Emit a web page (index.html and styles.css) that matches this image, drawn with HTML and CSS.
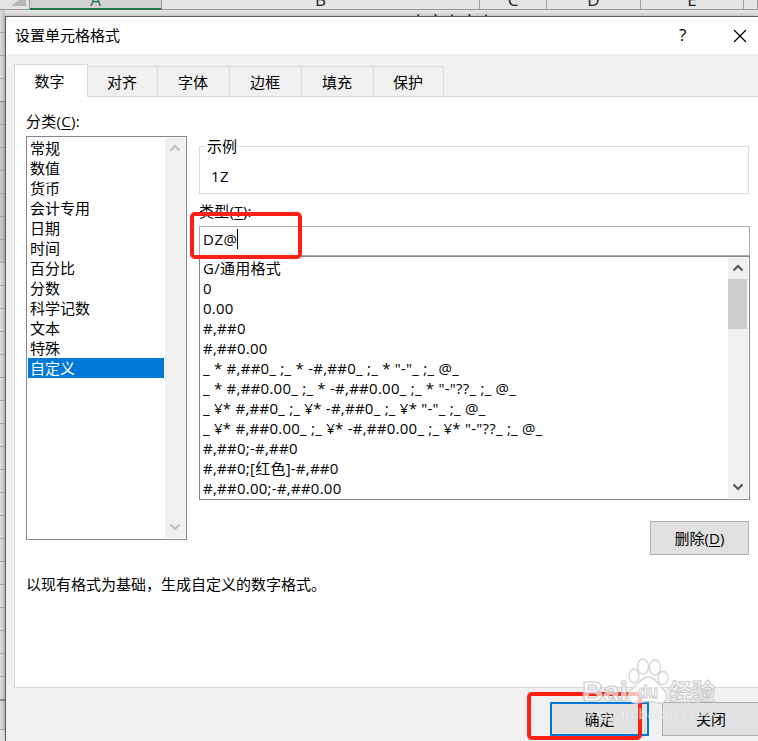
FILE: index.html
```html
<!DOCTYPE html>
<html lang="zh-CN">
<head>
<meta charset="utf-8">
<title>设置单元格格式</title>
<link rel="stylesheet" href="styles.css">
</head>
<body>
<div class="sheet">
  <div class="columns">
    <div class="corner"></div>
    <div class="col col-a"><span>A</span></div>
    <div class="col col-b"><span>B</span></div>
    <div class="col col-c"><span>C</span></div>
    <div class="col col-d"><span>D</span></div>
    <div class="col col-e"><span>E</span></div>
    <div class="col col-f"></div>
  </div>
  <div class="rows">
    <i class="first"></i><i></i><i></i><i class="edge"></i>
    <i class="sel"></i><i class="sel"></i><i class="sel"></i><i class="sel"></i><i class="sel"></i><i class="sel"></i><i class="sel"></i>
    <i></i><i></i><i></i><i></i><i></i><i></i><i></i><i></i><i></i><i></i><i></i><i></i><i></i><i></i><i></i><i></i><i></i><i></i><i class="last"></i><i class="tabs-row"></i>
  </div>
  <div class="cell-text">自定义定义</div>
</div>

<main class="dialog">
  <header class="titlebar">
    <h1>设置单元格格式</h1>
    <span class="help">?</span>
    <svg class="close" width="14" height="14" viewBox="0 0 14 14"><path d="M1 1L13 13M13 1L1 13"/></svg>
  </header>
  <nav class="tabs">
    <span class="tab active">数字</span><span class="tab t2">对齐</span><span class="tab t3">字体</span><span class="tab t4">边框</span><span class="tab t5">填充</span><span class="tab t6">保护</span>
    <span class="tab-line"></span>
  </nav>
  <section class="panel">
    <label class="category-label">分类(<u>C</u>):</label>
    <div class="content">
      <div class="category">
        <ul>
          <li>常规</li><li>数值</li><li>货币</li><li>会计专用</li><li>日期</li><li>时间</li><li>百分比</li><li>分数</li><li>科学记数</li><li>文本</li><li>特殊</li><li class="selected">自定义</li>
        </ul>
        <div class="scroll disabled">
          <svg width="12" height="8" viewBox="0 0 12 8"><path d="M1.5 6.5L6 2L10.5 6.5"/></svg>
          <svg width="12" height="8" viewBox="0 0 12 8"><path d="M1.5 1.5L6 6L10.5 1.5"/></svg>
        </div>
      </div>
      <div class="right">
        <div class="sample"><span class="legend">示例</span><span class="value">1Z</span></div>
        <label class="type-label">类型(<u>T</u>):</label>
        <div class="input"><span>DZ@</span><b class="caret"></b></div>
        <div class="formats">
          <ul>
            <li>G/通用格式</li>
            <li>0</li>
            <li>0.00</li>
            <li>#,##0</li>
            <li>#,##0.00</li>
            <li>_ * #,##0_ ;_ * -#,##0_ ;_ * "-"_ ;_ @_ </li>
            <li>_ * #,##0.00_ ;_ * -#,##0.00_ ;_ * "-"??_ ;_ @_ </li>
            <li>_ ¥* #,##0_ ;_ ¥* -#,##0_ ;_ ¥* "-"_ ;_ @_ </li>
            <li>_ ¥* #,##0.00_ ;_ ¥* -#,##0.00_ ;_ ¥* "-"??_ ;_ @_ </li>
            <li>#,##0;-#,##0</li>
            <li>#,##0;[红色]-#,##0</li>
            <li>#,##0.00;-#,##0.00</li>
          </ul>
          <div class="scroll">
            <svg width="12" height="8" viewBox="0 0 12 8"><path d="M1.5 6.5L6 2L10.5 6.5"/></svg>
            <div class="thumb"></div>
            <svg class="down" width="12" height="8" viewBox="0 0 12 8"><path d="M1.5 1.5L6 6L10.5 1.5"/></svg>
          </div>
        </div>
        <button class="delete">删除(<u>D</u>)</button>
      </div>
    </div>
    <p class="hint">以现有格式为基础，生成自定义的数字格式。</p>
  </section>
  <footer class="actions">
    <button class="ok">确定</button>
    <button class="cancel">关闭</button>
  </footer>
</main>

<div class="mark mark-input"></div>
<div class="mark mark-ok"></div>
<svg class="watermark" width="150" height="86" viewBox="0 0 150 86">
  <g class="paw">
    <ellipse cx="53" cy="26" rx="5" ry="7"/>
    <ellipse cx="62" cy="16.500" rx="5.500" ry="7.500"/>
    <ellipse cx="74" cy="17.500" rx="5.500" ry="7.500"/>
    <ellipse cx="82" cy="28" rx="5" ry="6.500"/>
    <path d="M67 27C60 27 58 34 51 39C43 46 48 54 57 53Q67 50 77 53C87 54 88 45 82 39C76 34 75 27 67 27Z"/>
  </g>
  <text class="brand" x="1" y="51" textLength="46" lengthAdjust="spacingAndGlyphs">Bai</text>
  <text class="brand small" x="57" y="48" textLength="20" lengthAdjust="spacingAndGlyphs">du</text>
  <text class="brand cn" x="88" y="50" textLength="46" lengthAdjust="spacingAndGlyphs">经验</text>
  <text class="site" x="2" y="69" textLength="130" lengthAdjust="spacingAndGlyphs">jingyan.baidu.com</text>
</svg>
</body>
</html>
```

FILE: styles.css
```css
* { box-sizing: border-box; }
body {
  margin: 0;
  width: 758px;
  height: 741px;
  overflow: hidden;
  position: relative;
  background: #e4e4e4;
  color: #000;
  font: 15px/20px "Open Sans", "Noto Sans CJK SC", sans-serif;
}
ul { margin: 0; padding: 0; list-style: none; }
u { text-underline-offset: 2px; text-decoration-thickness: 1px; }

.sheet { height: 741px; overflow: hidden; }
.columns { display: flex; height: 10px; background: #e4e4e4; border-bottom: 1px solid #999; }
.corner { width: 30px; display: flex; justify-content: flex-end; padding-right: 3px; border-right: 1px solid #a0a0a0; }
.corner::after { content: ""; width: 15px; height: 6px; background: #b7b7b7; clip-path: polygon(50% 0, 100% 0, 100% 100%, 0 100%); }
.col { height: 10px; border-right: 1px solid #a0a0a0; text-align: center; overflow: hidden; }
.col span { display: block; margin-top: -10px; font-size: 17px; line-height: 20px; color: #222; }
.col-a { width: 132px; background: #d2d2d2; border-bottom: 2px solid #217346; }
.col-a span { color: #217346; }
.col-b { width: 318px; }
.col-c { width: 67px; }
.col-d { width: 94px; }
.col-e { width: 103px; }
.col-f { flex: 1; }
.rows { display: flex; flex-direction: column; width: 5px; background: linear-gradient(90deg, #dcdcdc, #c5c5c5); }
.rows i { flex: none; height: 23px; border-bottom: 1px solid #aaa; }
.rows .sel { background: rgba(0, 0, 0, .08); }
.rows .edge { border-color: #888; }
.rows .last { height: 24px; border-bottom: 2px solid #888; }
.rows .tabs-row { height: 29px; }
.cell-text { position: absolute; left: 410px; top: 12px; height: 4px; overflow: hidden; font-size: 17px; line-height: 22px; }

.dialog {
  position: absolute;
  left: 5px;
  top: 16px;
  width: 753px;
  height: 725px;
  background: #f0f0f0;
  border-left: 1px solid #5c5c5c;
  border-top: 1px solid #5c5c5c;
  box-shadow: 0 -1px 4px rgba(0, 0, 0, .2);
  display: flex;
  flex-direction: column;
}
.titlebar { height: 37px; flex: none; background: #fff; display: flex; align-items: center; padding: 0 11px 0 9px; }
h1 { margin: -2px 0 0; flex: 1; font-size: 15px; font-weight: 400; line-height: 20px; }
.help { width: 10px; margin: -2px 44px 0 0; font-size: 17px; }
.close { fill: none; stroke: #000; stroke-width: 1.2; }

.tabs { height: 43px; flex: none; display: flex; align-items: flex-end; padding-left: 8px; }
.tab { height: 31px; border: 1px solid #d9d9d9; border-left: 0; padding-right: 1px; text-align: center; line-height: 31px; }
.tab.active { width: 74px; height: 33px; background: #fff; border-left: 1px solid #d9d9d9; border-bottom: 0; padding-right: 3px; line-height: 33px; }
.t2, .t6 { width: 70px; }
.t3, .t4, .t5 { width: 72px; }
.tab-line { flex: 1; border-bottom: 1px solid #d9d9d9; }

.panel { height: 591px; flex: none; margin-left: 8px; padding: 14px 8px 0 11px; background: #fff; border-left: 1px solid #d9d9d9; border-bottom: 1px solid #d9d9d9; }
.category-label { display: block; height: 25px; letter-spacing: .3px; }
.content { display: flex; gap: 12px; }
.category { width: 161px; height: 404px; border: 1px solid #828790; padding: 1px; display: flex; }
.category ul { width: 136px; }
.category li { height: 20px; padding-left: 2px; line-height: 20px; }
.category .selected { background: #0078d7; color: #fff; }
.scroll { width: 20px; background: #f0f0f0; margin-left: auto; display: flex; flex-direction: column; align-items: center; padding: 6px 1px 7px 0; }
.scroll svg { flex: none; fill: none; stroke: #555; stroke-width: 2; }
.scroll.disabled { justify-content: space-between; }
.scroll.disabled svg { stroke: #bfbfbf; }

.right { width: 551px; display: flex; flex-direction: column; }
.sample { width: 550px; height: 48px; margin-top: 10px; border: 1px solid #dcdcdc; display: flex; flex-direction: column; align-items: flex-start; }
.legend { margin: -11px 0 0 6px; padding: 0 1px; background: #fff; }
.value { margin: 10px 0 0 11px; letter-spacing: .3px; }
.type-label { margin-top: 7px; height: 25px; letter-spacing: .3px; }
.input { height: 30px; border: 1px solid #abadb3; display: flex; align-items: center; padding: 0 3px 4px; }
.input span { letter-spacing: .5px; }
.caret { width: 1px; height: 20px; background: #000; }
.formats { height: 244px; border: 1px solid #828790; padding: 1px; display: flex; }
.formats ul { flex: 1; padding-left: 2px; }
.formats li { height: 20px; letter-spacing: .25px; white-space: pre; }
.thumb { width: 19px; height: 50px; margin: 7px 0 0; background: #cdcdcd; flex: none; }
.down { margin-top: auto; }
button { font: inherit; color: #000; background: #e1e1e1; border: 1px solid #adadad; padding: 0; height: 34px; }
.delete { width: 99px; margin: 21px 1px 0 auto; }
.hint { margin: 19px 0 0; }

.actions { display: flex; padding: 14px 0 0 544px; gap: 13px; overflow: hidden; }
.ok { width: 99px; flex: none; border: 2px solid #0078d7; }
.cancel { width: 98px; flex: none; }

.mark { position: absolute; border: 4px solid #ff2015; border-radius: 5px; }
.mark-input { left: 190px; top: 212px; width: 112px; height: 47px; }
.mark-ok { left: 527px; top: 692px; width: 115px; height: 48px; }

.watermark { position: absolute; left: 581px; top: 650px; }
.paw { fill: rgba(255, 255, 255, .7); stroke: #d2d2d2; stroke-width: 1.3; }
.brand { font: 700 28px "Liberation Sans", "Noto Sans CJK SC", sans-serif; fill: rgba(255, 255, 255, .65); stroke: #cecece; stroke-width: 1.2; }
.brand.small { font-size: 19px; }
.brand.cn { font-family: "Noto Sans CJK SC", sans-serif; font-size: 23px; }
.site { font: 15px "Liberation Sans", sans-serif; fill: rgba(255, 255, 255, .65); stroke: rgba(190, 190, 190, .3); stroke-width: .6; }
```
